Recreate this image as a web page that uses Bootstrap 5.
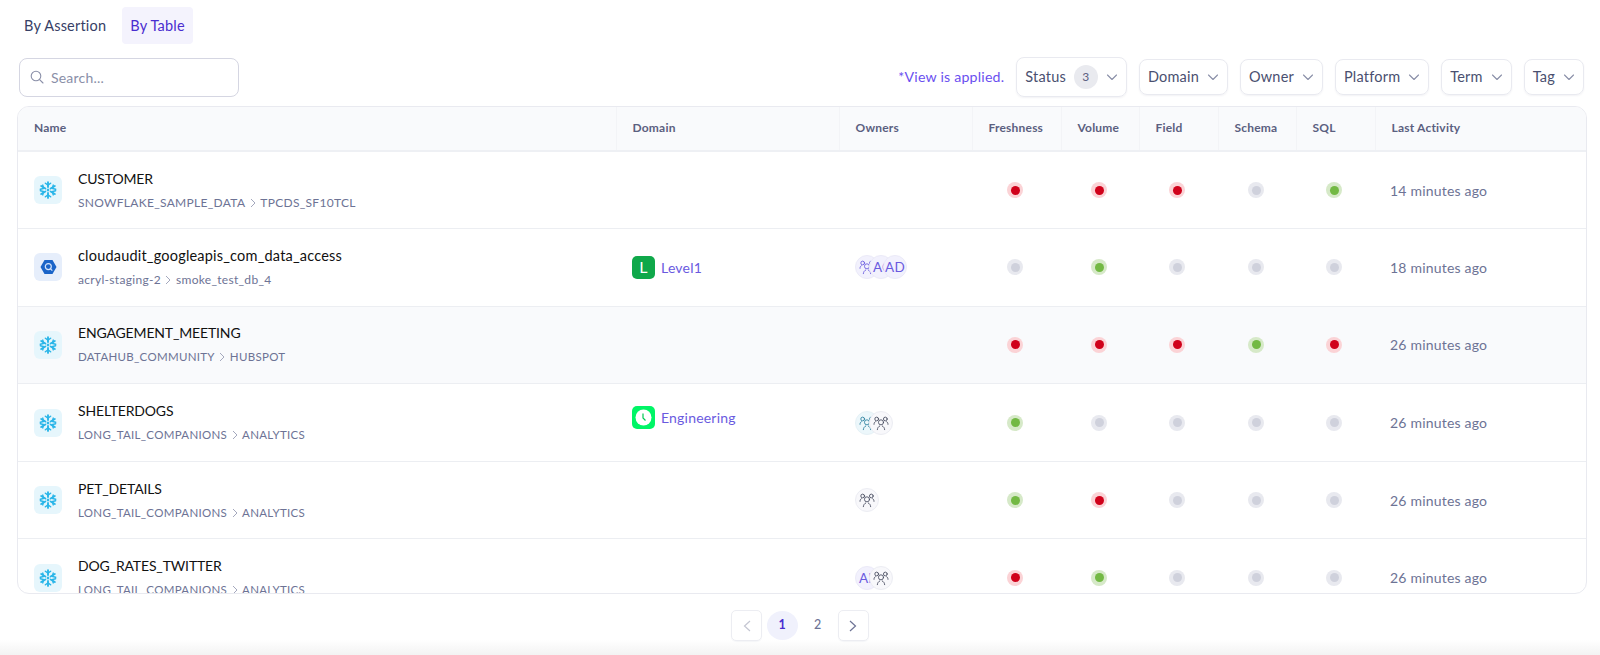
<!DOCTYPE html>
<html lang="en">
<head>
<meta charset="utf-8">
<title>Assertions</title>
<link href="https://cdn.jsdelivr.net/npm/bootstrap@5.3.0/dist/css/bootstrap.min.css" rel="stylesheet">
<style>
html,body{height:655px;overflow:hidden}
body{font-family:"Lato","Liberation Sans",sans-serif;color:#374066;background:#fff;letter-spacing:.2px}
.pg-wrap{height:640px;padding:7px 13px 0 17px}
.tab-row{margin-left:-1px}
.tab-link{height:37px;padding:0 8px;font-size:14.5px;color:#374066;border-radius:4px;line-height:37px}
.tab-on{background:#f4f3fd;color:#4a2dd0}
.tool-row{height:40px;margin-top:13px}
.search-box{width:220px;height:39px;margin-left:2px;border:1px solid #d5d6e2;border-radius:8px;padding-left:10px;gap:7px;color:#8a8fa8;font-size:14px}
.view-note{color:#6a4ff0;font-size:14.2px;margin-right:12px}
.filt-group{margin-right:3px}
.filt{height:36px;padding:0 8px;margin-left:12px;border:1px solid #e9eaf0;border-radius:8px;box-shadow:0 1px 2px rgba(30,40,90,.06);font-size:14.5px;color:#4a5070;gap:8px}
.filt-tall{height:40px;margin-left:0}
.count-pill{width:24px;height:24px;border-radius:50%;background:#e9eaef;color:#5c6080;font-size:12px}
.grid-shell{height:488px;margin-top:9px;border:1px solid #e9eaf0;border-radius:12px;overflow:hidden}
.grid-table{table-layout:fixed;width:100%;margin:0;border-collapse:collapse}
.grid-table th{height:44px;padding:0 0 2px 16px;background:#f9fafc;font-size:12px;font-weight:700;color:#5b6080;border-bottom:2px solid #eef0f4;border-right:1px solid #f3f4f7;vertical-align:middle}
.grid-table th:last-child{border-right:0}
.grid-table td{height:77.6px;padding:0 0 0 16px;border-bottom:1px solid #eceef2;vertical-align:middle;background:transparent;box-shadow:none}
.grid-table tr.row-hov td{background:#f9fafc}
.src-box{width:28px;height:28px;border-radius:6px;background:#e6f6fc;flex:none}
.src-blue{background:#e6eefb}
.tbl-name{font-size:14.5px;color:#111;line-height:20px}
.name-caps{font-size:14px;letter-spacing:-.15px}
.tbl-path{font-size:12px;color:#6d7395;line-height:18px;margin-top:5px;letter-spacing:.3px}
.path-caps{font-size:11.5px}
.path-sep{margin:0 3.5px}
.dom-box{width:23px;height:23px;border-radius:5px;color:#fff;font-size:16px}
.dom-green{background:#0fa84a}
.dom-lime{background:#00f566}
.dom-name{color:#6a5adf;font-size:14px}
.dom-gap{gap:6px}
.dom-up{margin-top:-10px}
.ava{width:24px;height:24px;border-radius:50%;border:1px solid #ebeaf8;background:#f2f1fd;color:#6a5adf;font-size:13.5px;margin-right:-10px;overflow:hidden;flex:none}
.ava-txt{padding-left:3px}
.ava-teal{background:#ecf7fb;border-color:#e6f1f6;color:#2b7f9e}
.ava-grey{background:#f8f8fb;border-color:#ecedf3;color:#454a5e}
.dot{display:block;width:16px;height:16px;border-radius:50%;background:#e8e9ef;position:relative}
.dot::after{content:"";position:absolute;left:3.5px;top:3.5px;width:9px;height:9px;border-radius:50%;background:#cfd1dc}
.dot-r{background:#fbd3d6}.dot-r::after{background:#d0021b}
.dot-g{background:#d6e9c8}.dot-g::after{background:#73b944}
.cell-dot{padding-left:30px!important}
.cell-first{padding-left:35px!important}
.ago{font-size:14px;color:#6d7395;padding-left:15px!important}
.pager{margin-top:16px;height:31px;gap:4.5px;padding-right:4px}
.pg-btn{width:31px;height:31px;border-radius:5px;border:1px solid #ecedf2;box-shadow:0 1px 1px rgba(30,40,90,.04)}
.pg-num{width:31px;height:29px;border-radius:50%;font-size:12.5px;color:#6d7395;font-weight:500}
.pg-cur{background:#f0f1fc;color:#4a2dd0;font-weight:700}
.foot-fade{height:15px;background:linear-gradient(#fff,#f3f3f3)}
</style>
</head>
<body>
<svg width="0" height="0" class="d-block position-absolute">
 <symbol id="ic-snow" viewBox="0 0 24 24"><g fill="none" stroke="#29b5e8" stroke-width="2.500" stroke-linecap="round"><path d="M12 1.500V8M12 16v6.500M2.900 6.700 8.500 10M15.500 14l5.600 3.300M2.900 17.300 8.500 14M15.500 10l5.600-3.300"/><path d="M8.500 3l3.500 2.500L15.500 3M8.500 21l3.500-2.500 3.500 2.500M1.800 11l4.200-1.200L5 5.500M22.200 13 18 14.200 19 18.500M1.800 13 6 14.200 5 18.500M22.200 11 18 9.800 19 5.500" stroke-width="2"/></g><path d="M12 9.800 14.200 12 12 14.200 9.800 12z" fill="#29b5e8"/></symbol>
 <symbol id="ic-team" viewBox="0 0 24 24"><g fill="none" stroke="currentColor" stroke-width="1.300" stroke-linecap="round"><circle cx="12" cy="11" r="3.800"/><circle cx="5.500" cy="6" r="2.800"/><circle cx="18.500" cy="6" r="2.800"/><path d="M6.500 22c.2-2.800 1.800-4.800 3.500-5.500M17.500 22c-.2-2.800-1.800-4.800-3.500-5.500M1.500 14c0-1.800.6-3.200 2-4M22.500 14c0-1.800-.6-3.200-2-4"/></g></symbol>
 <symbol id="ic-chev" viewBox="0 0 12 12"><path d="M1.500 4 6 8.500 10.500 4" fill="none" stroke="#8a8fa8" stroke-width="1.100" stroke-linecap="round" stroke-linejoin="round"/></symbol>
 <symbol id="ic-sep" viewBox="0 0 8 12"><path d="M2 2l4 4-4 4" fill="none" stroke="#a4a8bd" stroke-width="1"/></symbol>
</svg>

<div class="pg-wrap">
  <div class="d-flex tab-row">
    <div class="tab-link">By Assertion</div>
    <div class="tab-link tab-on ms-2">By Table</div>
  </div>

  <div class="d-flex align-items-center tool-row">
    <div class="search-box d-flex align-items-center">
      <svg width="14" height="14" viewBox="0 0 14 14"><circle cx="6" cy="6" r="4.800" fill="none" stroke="#8a8fa8" stroke-width="1.100"/><path d="M9.600 9.600 13 13" stroke="#8a8fa8" stroke-width="1.100" stroke-linecap="round"/></svg>
      <span>Search...</span>
    </div>
    <div class="ms-auto d-flex align-items-center filt-group">
      <span class="view-note">*View is applied.</span>
      <div class="filt filt-tall d-flex align-items-center">Status <span class="count-pill d-flex align-items-center justify-content-center">3</span><svg width="12" height="12"><use href="#ic-chev"/></svg></div>
      <div class="filt d-flex align-items-center">Domain<svg width="12" height="12"><use href="#ic-chev"/></svg></div>
      <div class="filt d-flex align-items-center">Owner<svg width="12" height="12"><use href="#ic-chev"/></svg></div>
      <div class="filt d-flex align-items-center">Platform<svg width="12" height="12"><use href="#ic-chev"/></svg></div>
      <div class="filt d-flex align-items-center">Term<svg width="12" height="12"><use href="#ic-chev"/></svg></div>
      <div class="filt d-flex align-items-center">Tag<svg width="12" height="12"><use href="#ic-chev"/></svg></div>
    </div>
  </div>

  <div class="grid-shell">
    <table class="table grid-table">
      <colgroup><col style="width:598px"><col style="width:223px"><col style="width:133px"><col style="width:89px"><col style="width:78px"><col style="width:79px"><col style="width:78px"><col style="width:79px"><col></colgroup>
      <thead><tr><th>Name</th><th>Domain</th><th>Owners</th><th>Freshness</th><th>Volume</th><th>Field</th><th>Schema</th><th>SQL</th><th>Last Activity</th></tr></thead>
      <tbody>
        <tr>
          <td><div class="d-flex align-items-center gap-3"><div class="src-box d-flex align-items-center justify-content-center"><svg width="18" height="18"><use href="#ic-snow"/></svg></div><div><div class="tbl-name name-caps">CUSTOMER</div><div class="tbl-path d-flex align-items-center">SNOWFLAKE_SAMPLE_DATA<svg class="path-sep" width="8" height="12"><use href="#ic-sep"/></svg>TPCDS_SF10TCL</div></div></div></td>
          <td></td><td></td>
          <td class="cell-first"><span class="dot dot-r"></span></td><td class="cell-dot"><span class="dot dot-r"></span></td><td class="cell-dot"><span class="dot dot-r"></span></td><td class="cell-dot"><span class="dot"></span></td><td class="cell-dot"><span class="dot dot-g"></span></td>
          <td class="ago">14 minutes ago</td>
        </tr>
        <tr>
          <td><div class="d-flex align-items-center gap-3"><div class="src-box src-blue d-flex align-items-center justify-content-center"><svg width="17" height="16" viewBox="0 0 17 16"><path d="M4.500 1h8L16.500 8l-4 7h-8L.5 8z" fill="#1a64c8"/><circle cx="8.300" cy="7.600" r="3" fill="none" stroke="#d5e4fb" stroke-width="1.200"/><path d="M10.300 9.600l2 2" stroke="#d5e4fb" stroke-width="1.200"/></svg></div><div><div class="tbl-name">cloudaudit_googleapis_com_data_access</div><div class="tbl-path d-flex align-items-center">acryl-staging-2<svg class="path-sep" width="8" height="12"><use href="#ic-sep"/></svg>smoke_test_db_4</div></div></div></td>
          <td><div class="d-flex align-items-center dom-gap"><span class="dom-box dom-green d-flex align-items-center justify-content-center">L</span><span class="dom-name">Level1</span></div></td>
          <td><div class="d-flex"><span class="ava d-flex align-items-center justify-content-center"><svg width="16" height="16"><use href="#ic-team"/></svg></span><span class="ava ava-txt d-flex align-items-center">AC</span><span class="ava d-flex align-items-center justify-content-center">AD</span></div></td>
          <td class="cell-first"><span class="dot"></span></td><td class="cell-dot"><span class="dot dot-g"></span></td><td class="cell-dot"><span class="dot"></span></td><td class="cell-dot"><span class="dot"></span></td><td class="cell-dot"><span class="dot"></span></td>
          <td class="ago">18 minutes ago</td>
        </tr>
        <tr class="row-hov">
          <td><div class="d-flex align-items-center gap-3"><div class="src-box d-flex align-items-center justify-content-center"><svg width="18" height="18"><use href="#ic-snow"/></svg></div><div><div class="tbl-name name-caps">ENGAGEMENT_MEETING</div><div class="tbl-path path-caps d-flex align-items-center">DATAHUB_COMMUNITY<svg class="path-sep" width="8" height="12"><use href="#ic-sep"/></svg>HUBSPOT</div></div></div></td>
          <td></td><td></td>
          <td class="cell-first"><span class="dot dot-r"></span></td><td class="cell-dot"><span class="dot dot-r"></span></td><td class="cell-dot"><span class="dot dot-r"></span></td><td class="cell-dot"><span class="dot dot-g"></span></td><td class="cell-dot"><span class="dot dot-r"></span></td>
          <td class="ago">26 minutes ago</td>
        </tr>
        <tr>
          <td><div class="d-flex align-items-center gap-3"><div class="src-box d-flex align-items-center justify-content-center"><svg width="18" height="18"><use href="#ic-snow"/></svg></div><div><div class="tbl-name name-caps">SHELTERDOGS</div><div class="tbl-path path-caps d-flex align-items-center">LONG_TAIL_COMPANIONS<svg class="path-sep" width="8" height="12"><use href="#ic-sep"/></svg>ANALYTICS</div></div></div></td>
          <td><div class="d-flex align-items-center dom-gap dom-up"><span class="dom-box dom-lime d-flex align-items-center justify-content-center"><svg width="17" height="17" viewBox="0 0 17 17"><circle cx="8.500" cy="8.500" r="8" fill="#fff"/><path d="M8 4.500V9l2.500 2.500" fill="none" stroke="#00c853" stroke-width="1.200"/></svg></span><span class="dom-name">Engineering</span></div></td>
          <td><div class="d-flex"><span class="ava ava-teal d-flex align-items-center justify-content-center"><svg width="16" height="16"><use href="#ic-team"/></svg></span><span class="ava ava-grey d-flex align-items-center justify-content-center"><svg width="16" height="16"><use href="#ic-team"/></svg></span></div></td>
          <td class="cell-first"><span class="dot dot-g"></span></td><td class="cell-dot"><span class="dot"></span></td><td class="cell-dot"><span class="dot"></span></td><td class="cell-dot"><span class="dot"></span></td><td class="cell-dot"><span class="dot"></span></td>
          <td class="ago">26 minutes ago</td>
        </tr>
        <tr>
          <td><div class="d-flex align-items-center gap-3"><div class="src-box d-flex align-items-center justify-content-center"><svg width="18" height="18"><use href="#ic-snow"/></svg></div><div><div class="tbl-name name-caps">PET_DETAILS</div><div class="tbl-path path-caps d-flex align-items-center">LONG_TAIL_COMPANIONS<svg class="path-sep" width="8" height="12"><use href="#ic-sep"/></svg>ANALYTICS</div></div></div></td>
          <td></td>
          <td><div class="d-flex"><span class="ava ava-grey d-flex align-items-center justify-content-center"><svg width="16" height="16"><use href="#ic-team"/></svg></span></div></td>
          <td class="cell-first"><span class="dot dot-g"></span></td><td class="cell-dot"><span class="dot dot-r"></span></td><td class="cell-dot"><span class="dot"></span></td><td class="cell-dot"><span class="dot"></span></td><td class="cell-dot"><span class="dot"></span></td>
          <td class="ago">26 minutes ago</td>
        </tr>
        <tr>
          <td><div class="d-flex align-items-center gap-3"><div class="src-box d-flex align-items-center justify-content-center"><svg width="18" height="18"><use href="#ic-snow"/></svg></div><div><div class="tbl-name name-caps">DOG_RATES_TWITTER</div><div class="tbl-path path-caps d-flex align-items-center">LONG_TAIL_COMPANIONS<svg class="path-sep" width="8" height="12"><use href="#ic-sep"/></svg>ANALYTICS</div></div></div></td>
          <td></td>
          <td><div class="d-flex"><span class="ava ava-txt d-flex align-items-center">AI</span><span class="ava ava-grey d-flex align-items-center justify-content-center"><svg width="16" height="16"><use href="#ic-team"/></svg></span></div></td>
          <td class="cell-first"><span class="dot dot-r"></span></td><td class="cell-dot"><span class="dot dot-g"></span></td><td class="cell-dot"><span class="dot"></span></td><td class="cell-dot"><span class="dot"></span></td><td class="cell-dot"><span class="dot"></span></td>
          <td class="ago">26 minutes ago</td>
        </tr>
      </tbody>
    </table>
  </div>

  <div class="pager d-flex align-items-center justify-content-center">
    <div class="pg-btn d-flex align-items-center justify-content-center"><svg width="10" height="14" viewBox="0 0 10 14"><path d="M8 2 2.500 7 8 12" fill="none" stroke="#c4c6d2" stroke-width="1.200"/></svg></div>
    <div class="pg-num pg-cur d-flex align-items-center justify-content-center">1</div>
    <div class="pg-num d-flex align-items-center justify-content-center">2</div>
    <div class="pg-btn d-flex align-items-center justify-content-center"><svg width="10" height="14" viewBox="0 0 10 14"><path d="M2 2 7.500 7 2 12" fill="none" stroke="#6d7395" stroke-width="1.200"/></svg></div>
  </div>
</div>
<div class="foot-fade"></div>
<script src="https://cdn.jsdelivr.net/npm/bootstrap@5.3.0/dist/js/bootstrap.bundle.min.js"></script>
</body>
</html>
